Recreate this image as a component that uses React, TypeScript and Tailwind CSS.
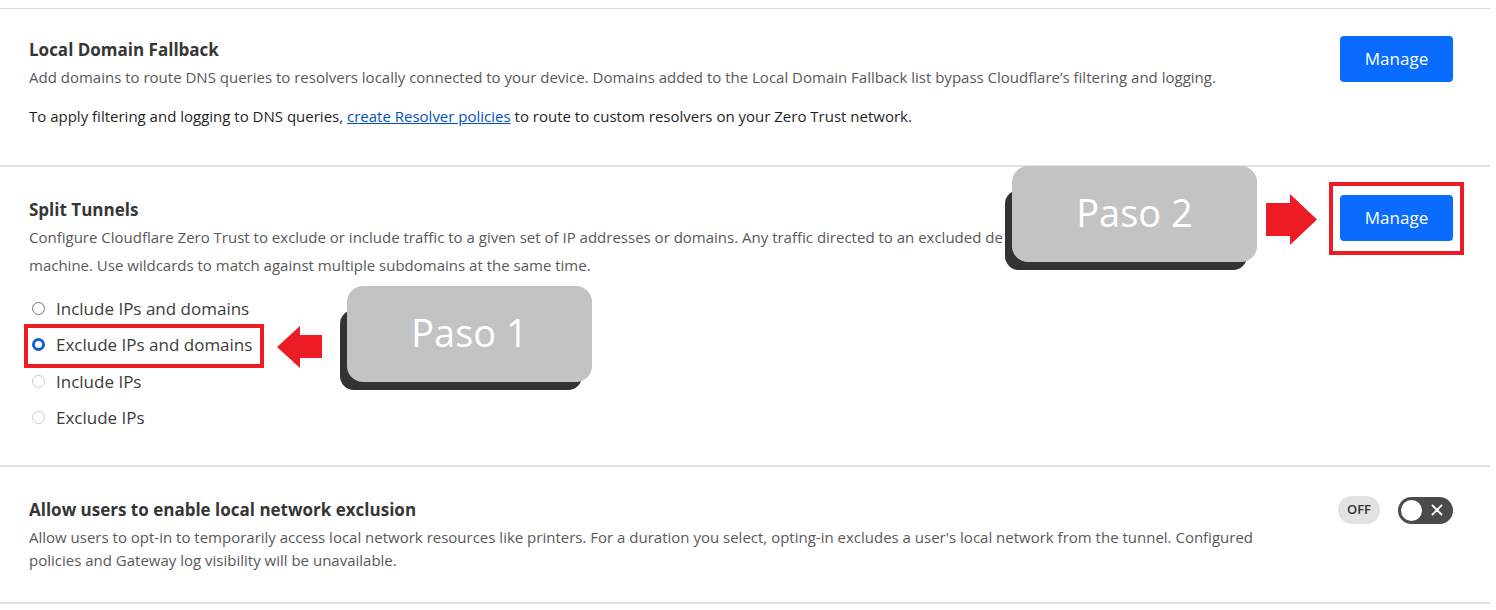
import React from 'react';

const Radio = ({ label, checked, disabled }: { label: string; checked?: boolean; disabled?: boolean }) => {
  let ring = "border border-[#767676]";
  if (checked) ring = "border-[3.5px] border-[#0b63d6]";
  else if (disabled) ring = "border border-[#c9c9c9]";
  return (
    <div className="flex items-center h-[36.5px]">
      <span className={"ml-[3px] w-[13px] h-[13px] rounded-full bg-white box-border " + ring}></span>
      <span className="ml-[11px] text-[17px] text-[#3c3c3c]">{label}</span>
    </div>
  );
};

const ManageButton = () => (
  <button className="w-[113px] h-[46px] rounded-[4px] bg-[#0a6cff] text-white text-[17px] shrink-0">Manage</button>
);

const Callout = ({ text }: { text: string }) => (
  <div className="relative w-[245px] h-[96px]">
    <div className="absolute left-[-7px] top-[24px] w-[242px] h-[80px] rounded-[14px] bg-[#333]"></div>
    <div className="absolute inset-0 rounded-[16px] bg-[#c3c3c3] flex items-center justify-center pb-[4px]">
      <span className="text-white text-[38px] leading-none">{text}</span>
    </div>
  </div>
);

export default function App() {
  return (
    <div className="relative w-[1496px] h-[610px] bg-white overflow-hidden text-[#555] font-['Segoe_UI','Open_Sans',sans-serif]">
      <div className="pt-2 w-[1490px]">
        <div className="border-t border-[#dcdcdc]"></div>

        {/* Local Domain Fallback */}
        <div className="flex justify-between pl-[29px] pr-[37px] pt-[27px] pb-[38px] border-b-2 border-[#e0e0e0]">
          <div className="pt-[2px]">
            <h3 className="text-[17px] font-bold leading-[24px] text-[#363636]">Local Domain Fallback</h3>
            <p className="mt-[4px] text-[15px] leading-[22px] text-[#595959]">
              Add domains to route DNS queries to resolvers locally connected to your device. Domains added to the Local Domain Fallback list bypass Cloudflare’s filtering and logging.
            </p>
            <p className="mt-[17px] text-[15px] leading-[22px] text-[#1f1f1f]">
              To apply filtering and logging to DNS queries,{" "}
              <a className="text-[#0051c3] underline">create Resolver policies</a> to route to custom resolvers on your Zero Trust network.
            </p>
          </div>
          <ManageButton />
        </div>

        {/* Split Tunnels */}
        <div className="flex justify-between pl-[29px] pr-[37px] pt-[28px] pb-[29px] border-b-2 border-[#e0e0e0]">
          <div className="pt-[3px]">
            <h3 className="text-[17px] font-bold leading-[24px] text-[#363636]">Split Tunnels</h3>
            <p className="mt-[1px] text-[15px] leading-[28px] text-[#595959]">
              Configure Cloudflare Zero Trust to exclude or include traffic to a given set of IP addresses or domains. Any traffic directed to an excluded de<span className="invisible">stination bypasses</span><br />
              machine. Use wildcards to match against multiple subdomains at the same time.
            </p>
            <div className="mt-[11px]">
              <Radio label="Include IPs and domains" />
              <Radio label="Exclude IPs and domains" checked />
              <Radio label="Include IPs" disabled />
              <Radio label="Exclude IPs" disabled />
            </div>
          </div>
          <ManageButton />
        </div>

        {/* Local network exclusion */}
        <div className="flex justify-between pl-[29px] pr-[37px] pt-[30px] pb-[30px] border-b-2 border-[#e0e0e0]">
          <div className="pt-[1px] max-w-[1240px]">
            <h3 className="text-[17px] font-bold leading-[24px] text-[#363636]">Allow users to enable local network exclusion</h3>
            <p className="mt-[4px] text-[15px] leading-[23px] text-[#595959]">
              Allow users to opt-in to temporarily access local network resources like printers. For a duration you select, opting-in excludes a user's local network from the tunnel. Configured<br />
              policies and Gateway log visibility will be unavailable.
            </p>
          </div>
          <div className="flex items-center gap-[18px] shrink-0 h-[28px] -mt-[1px]">
            <span className="w-[42px] h-[28px] rounded-full bg-[#e2e2e2] text-[13px] font-semibold text-[#333] flex items-center justify-center">OFF</span>
            <span className="relative w-[55px] h-[27px] rounded-full bg-[#4a4a4a] flex items-center">
              <span className="absolute left-[1px] top-[1px] w-[25px] h-[25px] rounded-full bg-white border-2 border-[#4a4a4a]"></span>
              <svg className="absolute right-[10px]" width="12" height="12" viewBox="0 0 12 12">
                <path d="M1.5 1.5 L10.5 10.5 M10.5 1.5 L1.5 10.5" stroke="white" strokeWidth="1.8" strokeLinecap="round" />
              </svg>
            </span>
          </div>
        </div>
      </div>

      {/* Annotations */}
      <div className="absolute left-[1012px] top-[166px]"><Callout text="Paso 2" /></div>
      <div className="absolute left-[347px] top-[286px]"><Callout text="Paso 1" /></div>

      <svg className="absolute left-[1266px] top-[194px]" width="52" height="52" viewBox="0 0 52 52">
        <polygon points="0,9 24,9 24,0 51,25.5 24,51 24,42 0,42" fill="#ed1c24" />
      </svg>
      <svg className="absolute left-[277px] top-[326px]" width="46" height="43" viewBox="0 0 46 43">
        <polygon points="0,21 23,0 23,9 45,9 45,32 23,32 23,42" fill="#ed1c24" />
      </svg>

      <div className="absolute left-[1329px] top-[182px] w-[135px] h-[73px] border-4 border-[#ed1c24]"></div>
      <div className="absolute left-[24px] top-[324px] w-[240px] h-[44px] border-4 border-[#ed1c24]"></div>
    </div>
  );
}
